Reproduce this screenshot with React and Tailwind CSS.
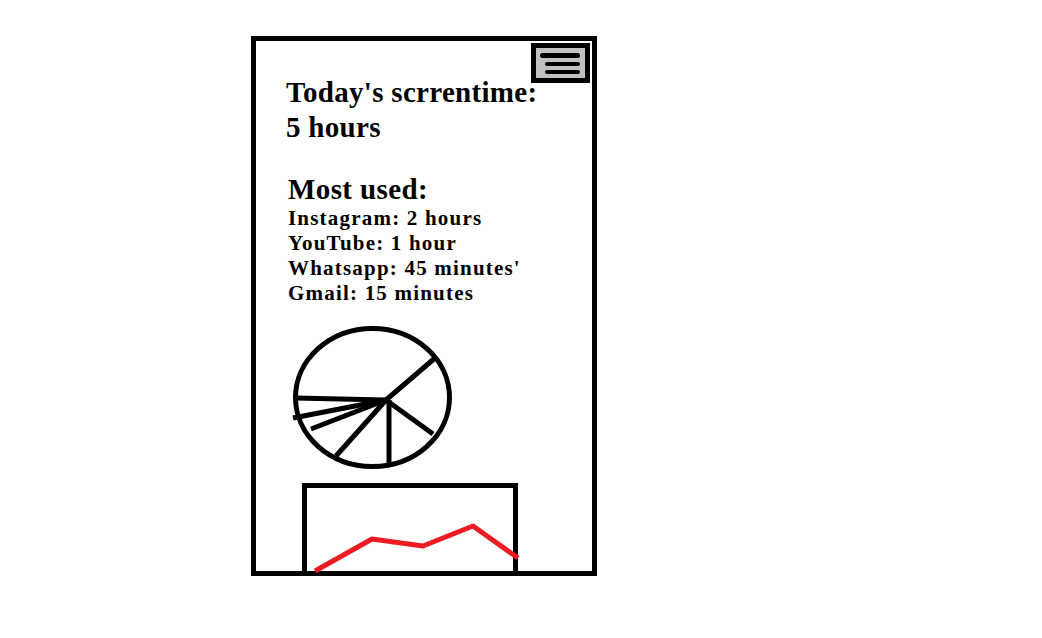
import React from 'react';

const usage = [
  'Instagram: 2 hours',
  'YouTube: 1 hour',
  "Whatsapp: 45 minutes'",
  'Gmail: 15 minutes',
];

// pie slices, drawn from the center out (svg coords)
const spokes = [
  [179, 37],
  [177, 113],
  [80, 135],
  [55, 108],
  [37, 97],
  [39, 77],
];

function MenuButton() {
  return (
    <div className="absolute top-[2px] right-[2px] w-[59px] h-[40px] border-[5px] border-black bg-[#c0c0c0] flex flex-col justify-center items-end gap-[4px] pr-[5px]">
      <div className="w-[40px] h-[5px] rounded-full bg-black" />
      <div className="w-[35px] h-[4px] rounded-full bg-black" />
      <div className="w-[35px] h-[4px] rounded-full bg-black" />
    </div>
  );
}

function PieChart() {
  return (
    <svg width="336" height="160" className="block shrink-0">
      <ellipse cx="116.5" cy="76.5" rx="77" ry="69" fill="none" stroke="black" strokeWidth="5" />
      {spokes.map(([x, y], i) => (
        <line key={i} x1="130" y1="79" x2={x} y2={y} stroke="black" strokeWidth="5" />
      ))}
      <line x1="133" y1="79" x2="133" y2="146" stroke="black" strokeWidth="5" />
    </svg>
  );
}

function LineChart() {
  return (
    <div className="mt-auto ml-[46px] w-[216px] h-[88px] border-[5px] border-b-0 border-black">
      <svg width="206" height="83" className="block overflow-visible">
        <polyline
          points="8,83 65,51 116,58 166,38 211,70"
          fill="none"
          stroke="#ed1c24"
          strokeWidth="5"
          strokeLinejoin="round"
        />
      </svg>
    </div>
  );
}

export default function App() {
  return (
    <div className="min-h-screen bg-white pt-[36px] pl-[251px]" style={{ fontFamily: '"Liberation Serif", "Times New Roman", serif' }}>
      <div className="relative w-[346px] h-[540px] border-[5px] border-black flex flex-col">
        <MenuButton />

        <h1 className="pt-[34px] pl-[30px] text-[29px] leading-[35px] font-bold tracking-[0.3px] text-black">
          Today's scrrentime:
          <br />
          5 hours
        </h1>

        <h2 className="mt-[27px] pl-[32px] text-[29px] leading-[34px] font-bold tracking-[0.4px] text-black">Most used:</h2>
        <ul className="pl-[32px]">
          {usage.map((u) => (
            <li key={u} className="text-[21px] leading-[25px] font-bold tracking-[1.2px] text-black">
              {u}
            </li>
          ))}
        </ul>

        <div className="mt-[15px]">
          <PieChart />
        </div>

        <LineChart />
      </div>
    </div>
  );
}
